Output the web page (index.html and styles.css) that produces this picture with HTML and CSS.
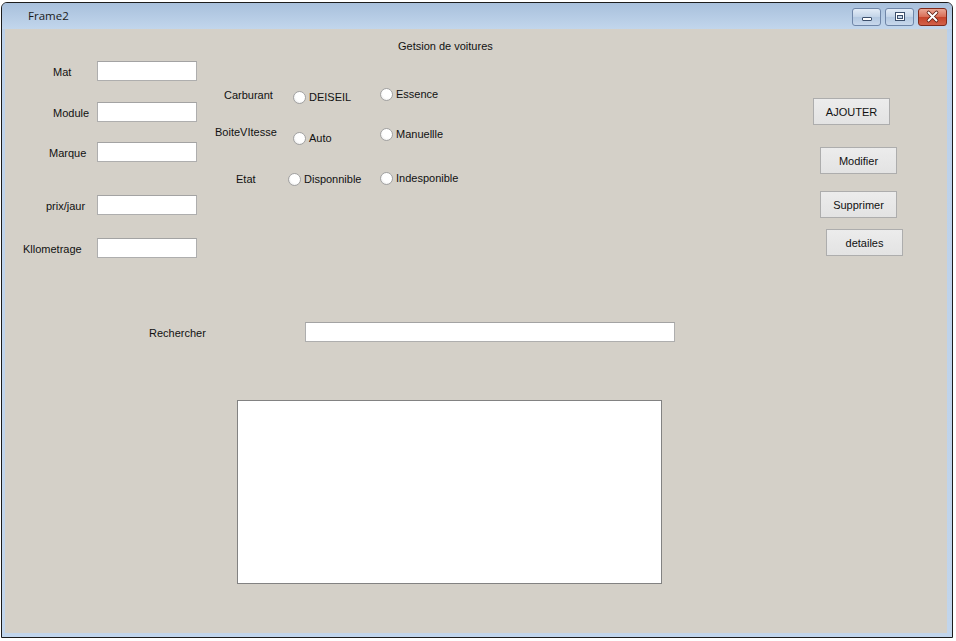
FILE: index.html
```html
<!DOCTYPE html>
<html lang="fr">
<head>
<meta charset="utf-8">
<title>Frame2</title>
<link rel="stylesheet" href="styles.css">
</head>
<body>
<div class="window">
  <div class="titlebar">
    <span class="title">Frame2</span>
    <div class="controls">
      <span class="ctl ctl-min">
        <svg width="29" height="18" viewBox="0 0 29 18"><rect x="10.5" y="9.5" width="9" height="3" rx="0.5" fill="#fff" stroke="#3c4f6c"/></svg>
      </span>
      <span class="ctl ctl-max">
        <svg width="29" height="18" viewBox="0 0 29 18"><rect x="10.5" y="4.5" width="9" height="8" fill="#fff" stroke="#3c4f6c"/><rect x="12.5" y="7.5" width="5" height="3" fill="#c9d8ea" stroke="#3c4f6c"/></svg>
      </span>
      <span class="ctl ctl-close">
        <svg width="29" height="18" viewBox="0 0 29 18"><path d="M10.5 4.5 L18.5 12.5 M18.5 4.5 L10.5 12.5" stroke="#5a1a10" stroke-width="3.6" stroke-linecap="round"/><path d="M10.5 4.5 L18.5 12.5 M18.5 4.5 L10.5 12.5" stroke="#fff" stroke-width="2" stroke-linecap="round"/></svg>
      </span>
    </div>
  </div>
  <div class="content">
    <div class="heading">Getsion de voitures</div>
    <div class="top">
      <div class="form">
        <div class="frow frow-1"><span class="flabel pl-48">Mat</span><span class="field"></span></div>
        <div class="frow frow-2"><span class="flabel pl-48">Module</span><span class="field"></span></div>
        <div class="frow frow-3"><span class="flabel pl-44">Marque</span><span class="field"></span></div>
        <div class="frow frow-4"><span class="flabel pl-41">prix/jaur</span><span class="field"></span></div>
        <div class="frow frow-5"><span class="flabel pl-18">Kllometrage</span><span class="field"></span></div>
      </div>
      <div class="options">
        <div class="orow orow-1">
          <span class="olabel pl-9 mt-3">Carburant</span>
          <span class="ocell"><span class="radio pl-5 mt-5"><span class="dot"></span>DEISEIL</span></span>
          <span class="radio mt-2"><span class="dot"></span>Essence</span>
        </div>
        <div class="orow orow-2">
          <span class="olabel">BoiteVItesse</span>
          <span class="ocell"><span class="radio pl-5 mt-6"><span class="dot"></span>Auto</span></span>
          <span class="radio mt-2"><span class="dot"></span>Manuellle</span>
        </div>
        <div class="orow orow-3">
          <span class="olabel pl-21 mt-2">Etat</span>
          <span class="ocell"><span class="radio mt-2"><span class="dot"></span>Disponnible</span></span>
          <span class="radio mt-1"><span class="dot"></span>Indesponible</span>
        </div>
      </div>
      <div class="buttons">
        <span class="btn btn-1">AJOUTER</span>
        <span class="btn btn-2">Modifier</span>
        <span class="btn btn-3">Supprimer</span>
        <span class="btn btn-4">detailes</span>
      </div>
    </div>
    <div class="search">
      <span class="slabel">Rechercher</span>
      <span class="sfield"></span>
    </div>
    <div class="table"></div>
  </div>
</div>
</body>
</html>
```
FILE: styles.css
```css
html, body {
  margin: 0;
  padding: 0;
  background: #ffffff;
}
body {
  width: 956px;
  height: 641px;
  overflow: hidden;
  font-family: "Liberation Sans", Arial, sans-serif;
  font-size: 11px;
  color: #111;
}
.window {
  box-sizing: border-box;
  margin: 2px 0 0 1px;
  width: 952px;
  height: 636px;
  border: 1px solid #1c1c1c;
  border-radius: 6px 6px 0 0;
  background: linear-gradient(#a9c1dd 0, #bcd1ea 30px, #c1d5ec 100%);
  padding: 0 5px 4px 3px;
  display: flex;
  flex-direction: column;
}
.titlebar {
  height: 26px;
  display: flex;
  align-items: flex-start;
  justify-content: space-between;
  background: linear-gradient(#a8c0dc, #c2d6ec);
  margin: 0 -5px 0 -3px;
  padding: 0 5px 0 3px;
  border-radius: 5px 5px 0 0;
}
.title {
  font-family: "Open Sans", "Noto Sans", sans-serif;
  font-size: 11.5px;
  color: #1a1a1a;
  margin: 5px 0 0 23px;
  line-height: 16px;
}
.controls {
  display: flex;
  gap: 4px;
  margin-top: 5px;
  margin-right: 0;
}
.ctl {
  box-sizing: border-box;
  width: 29px;
  height: 18px;
  border: 1px solid #6f86a8;
  border-radius: 3px;
  background: linear-gradient(#e3ecf7, #c3d4e8 50%, #b3c8e1 51%, #c8d8ec);
  display: flex;
  align-items: center;
  justify-content: center;
  overflow: hidden;
}
.ctl svg {
  display: block;
  flex: none;
}
.ctl-close {
  border-color: #7f2a1c;
  background: linear-gradient(#eaa795, #d86c55 50%, #c6432a 51%, #d2614a);
}
.content {
  flex: 1;
  background: #d4d0c8;
  display: flex;
  flex-direction: column;
}
.heading {
  margin-top: 10px;
  padding-left: 393px;
  line-height: 14px;
}
.top {
  display: flex;
  align-items: flex-start;
}
.form {
  width: 192px;
  margin-top: 8px;
}
.frow {
  display: flex;
  align-items: center;
  height: 20px;
}
.frow-2 { margin-top: 21px; }
.frow-3 { margin-top: 20px; }
.frow-4 { margin-top: 33px; }
.frow-5 { margin-top: 23px; }
.flabel {
  box-sizing: border-box;
  width: 92px;
  line-height: 14px;
  margin-top: 2px;
}
.field, .sfield {
  box-sizing: border-box;
  width: 100px;
  height: 20px;
  background: #fff;
  border: 1px solid #aeaeae;
  border-top-color: #a3a3a3;
}
.pl-5 { padding-left: 5px; }
.pl-9 { padding-left: 9px; }
.pl-18 { padding-left: 18px; }
.pl-21 { padding-left: 21px; }
.pl-41 { padding-left: 41px; }
.pl-44 { padding-left: 44px; }
.pl-48 { padding-left: 48px; }
.mt-1 { margin-top: 1px; }
.mt-2 { margin-top: 2px; }
.mt-3 { margin-top: 3px; }
.mt-5 { margin-top: 5px; }
.mt-6 { margin-top: 6px; }
.options {
  margin-left: 18px;
  width: 598px;
  margin-top: 32px;
}
.orow {
  display: flex;
  align-items: flex-start;
  height: 20px;
}
.orow-2 { margin-top: 20px; }
.orow-3 { margin-top: 25px; }
.olabel {
  box-sizing: border-box;
  width: 73px;
  line-height: 14px;
  white-space: nowrap;
}
.ocell {
  width: 92px;
  display: flex;
}
.radio {
  display: flex;
  align-items: center;
  gap: 3px;
  line-height: 14px;
  white-space: nowrap;
}
.dot {
  box-sizing: border-box;
  width: 13px;
  height: 13px;
  border-radius: 50%;
  border: 1px solid #a2a2a2;
  background: radial-gradient(circle at 60% 40%, #ffffff 50%, #ececec 80%, #dcdcdc);
  flex: none;
}
.buttons {
  display: flex;
  flex-direction: column;
  align-items: flex-start;
  margin-top: 45px;
}
.btn {
  box-sizing: border-box;
  width: 77px;
  height: 27px;
  border: 1px solid #adadad;
  background: linear-gradient(#ececec, #e3e3e3);
  display: flex;
  align-items: center;
  justify-content: center;
  line-height: 14px;
}
.btn-2 { margin: 22px 0 0 7px; }
.btn-3 { margin: 17px 0 0 7px; }
.btn-4 { margin: 11px 0 0 13px; }
.search {
  display: flex;
  align-items: center;
  height: 20px;
  margin-top: 64px;
}
.slabel {
  box-sizing: border-box;
  width: 300px;
  padding-left: 144px;
  line-height: 14px;
  margin-top: 2px;
}
.sfield {
  width: 370px;
}
.table {
  box-sizing: border-box;
  margin: 58px 0 0 232px;
  width: 425px;
  height: 184px;
  background: #fff;
  border: 1px solid #828282;
}
```
